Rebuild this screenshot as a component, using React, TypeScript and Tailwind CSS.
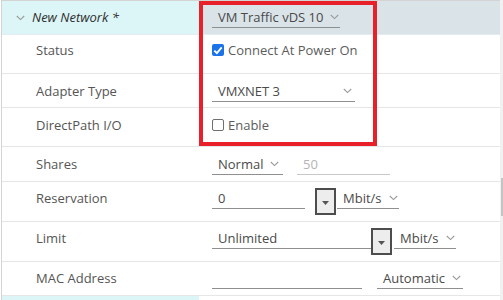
import React from 'react';

// Small down chevron used by the Clarity-style selects
function Chevron({ className = '' }: { className?: string }): React.ReactElement {
  return (
    <svg width="9" height="6" viewBox="0 0 9 6" className={className}>
      <path d="M0.8 1 L4.5 4.6 L8.2 1" fill="none" stroke="#9a9a9a" strokeWidth="1.1" />
    </svg>
  );
}

function Select({
  value,
  width,
  chevronGap,
}: {
  value: string;
  width: number;
  chevronGap?: string;
}): React.ReactElement {
  return (
    <div
      className="flex items-center border-b border-[#8f8f8f] pb-[2px] pl-[6px] leading-[16px] text-[#4a4a4a]"
      style={{ width }}
    >
      <span>{value}</span>
      <Chevron className={chevronGap ?? 'ml-[7px]'} />
    </div>
  );
}

function Field({
  value,
  width,
  muted,
}: {
  value: string;
  width: number;
  muted?: boolean;
}): React.ReactElement {
  return (
    <div
      className={`h-[19px] border-b border-[#8f8f8f] pb-[2px] pl-[6px] leading-[16px] ${
        muted ? 'text-[#b4b4b4] border-[#c8c8c8]' : 'text-[#4a4a4a]'
      }`}
      style={{ width }}
    >
      {value}
    </div>
  );
}

function SpinButton(): React.ReactElement {
  return (
    <div className="-mt-[2px] flex h-[27px] w-[21px] items-end justify-center border-2 border-[#4d4d4d] bg-[#ededed] pb-[8px]">
      <svg width="7" height="4" viewBox="0 0 7 4">
        <path d="M0 0 L7 0 L3.5 4 Z" fill="#555" />
      </svg>
    </div>
  );
}

function Checkbox({ checked }: { checked: boolean }): React.ReactElement {
  if (checked) {
    return (
      <span className="flex h-[12px] w-[12px] items-center justify-center rounded-[2px] bg-[#1a73e8]">
        <svg width="10" height="9" viewBox="0 0 10 9">
          <path d="M1.3 4.6 L3.9 7.2 L8.7 1.4" fill="none" stroke="#fff" strokeWidth="1.9" />
        </svg>
      </span>
    );
  }
  return <span className="h-[12px] w-[12px] rounded-[2px] border border-[#6f6f6f] bg-white" />;
}

function Row({
  height,
  pt,
  label,
  children,
}: {
  height: number;
  pt: number;
  label: string;
  children: React.ReactNode;
}): React.ReactElement {
  return (
    <div className="flex border-b border-[#e6e6e6]" style={{ height }}>
      <div className="w-[197px] shrink-0 pl-[34px] leading-[16px] text-[#555]" style={{ paddingTop: pt }}>
        {label}
      </div>
      <div className="flex flex-1 items-start pl-[13px]" style={{ paddingTop: pt }}>
        {children}
      </div>
    </div>
  );
}

export default function App(): React.ReactElement {
  return (
    <div className="relative h-[300px] w-[503px] overflow-hidden bg-white font-['Open_Sans',sans-serif] text-[13px]">
      <div className="flex h-full">
        <div className="ml-px flex-1 border-l border-t border-[#d4d4d4]">
          {/* header */}
          <div className="flex h-[34px] border-b border-[#e3ecf0]">
            <div className="flex w-[197px] shrink-0 items-start bg-[#dcf5f6] pl-[14px] pt-[8px]">
              <Chevron className="mt-[6px]" />
              <span className="ml-[7px] font-medium italic leading-[16px] text-[#2f2f2f]">New Network *</span>
            </div>
            <div className="flex flex-1 items-start bg-[#d9e3e8] pl-[13px] pt-[8px]">
              <Select value="VM Traffic vDS 10" width={128} />
            </div>
          </div>

          <Row height={39} pt={7} label="Status">
            <label className="flex items-center gap-[4px] leading-[16px] text-[#5c5c5c]">
              <Checkbox checked />
              Connect At Power On
            </label>
          </Row>

          <Row height={34} pt={9} label="Adapter Type">
            <div className="flex w-[143px] items-center justify-between border-b border-[#8f8f8f] pb-[2px] pl-[6px] pr-[3px] leading-[16px] text-[#4a4a4a]">
              <span>VMXNET 3</span>
              <Chevron />
            </div>
          </Row>

          <Row height={39} pt={9} label="DirectPath I/O">
            <label className="flex items-center gap-[4px] leading-[16px] text-[#5c5c5c]">
              <Checkbox checked={false} />
              Enable
            </label>
          </Row>

          <Row height={35} pt={9} label="Shares">
            <Select value="Normal" width={71} />
            <div className="ml-[14px]">
              <Field value="50" width={93} muted />
            </div>
          </Row>

          <Row height={40} pt={8} label="Reservation">
            <Field value="0" width={93} />
            <div className="ml-[10px]">
              <SpinButton />
            </div>
            <div className="ml-px">
              <Select value="Mbit/s" width={62} />
            </div>
          </Row>

          <Row height={40} pt={8} label="Limit">
            <Field value="Unlimited" width={159} />
            <SpinButton />
            <div className="ml-[2px]">
              <Select value="Mbit/s" width={62} />
            </div>
          </Row>

          <Row height={34} pt={8} label="MAC Address">
            <Field value="" width={150} />
            <div className="ml-[15px]">
              <Select value="Automatic" width={86} />
            </div>
          </Row>

          <div className="flex h-[10px]">
            <div className="w-[197px] bg-[#dcf5f6]" />
          </div>
        </div>
        {/* scrollbar */}
        <div className="relative w-[3px] bg-[#f1f1f1]">
          <div className="absolute left-[1px] top-[178px] h-[38px] w-[2px] bg-[#c4c4c4]" />
        </div>
      </div>

      {/* annotation box */}
      <div className="pointer-events-none absolute left-[199px] top-[1px] h-[145px] w-[178px] border-4 border-[#e8202a]" />
    </div>
  );
}
